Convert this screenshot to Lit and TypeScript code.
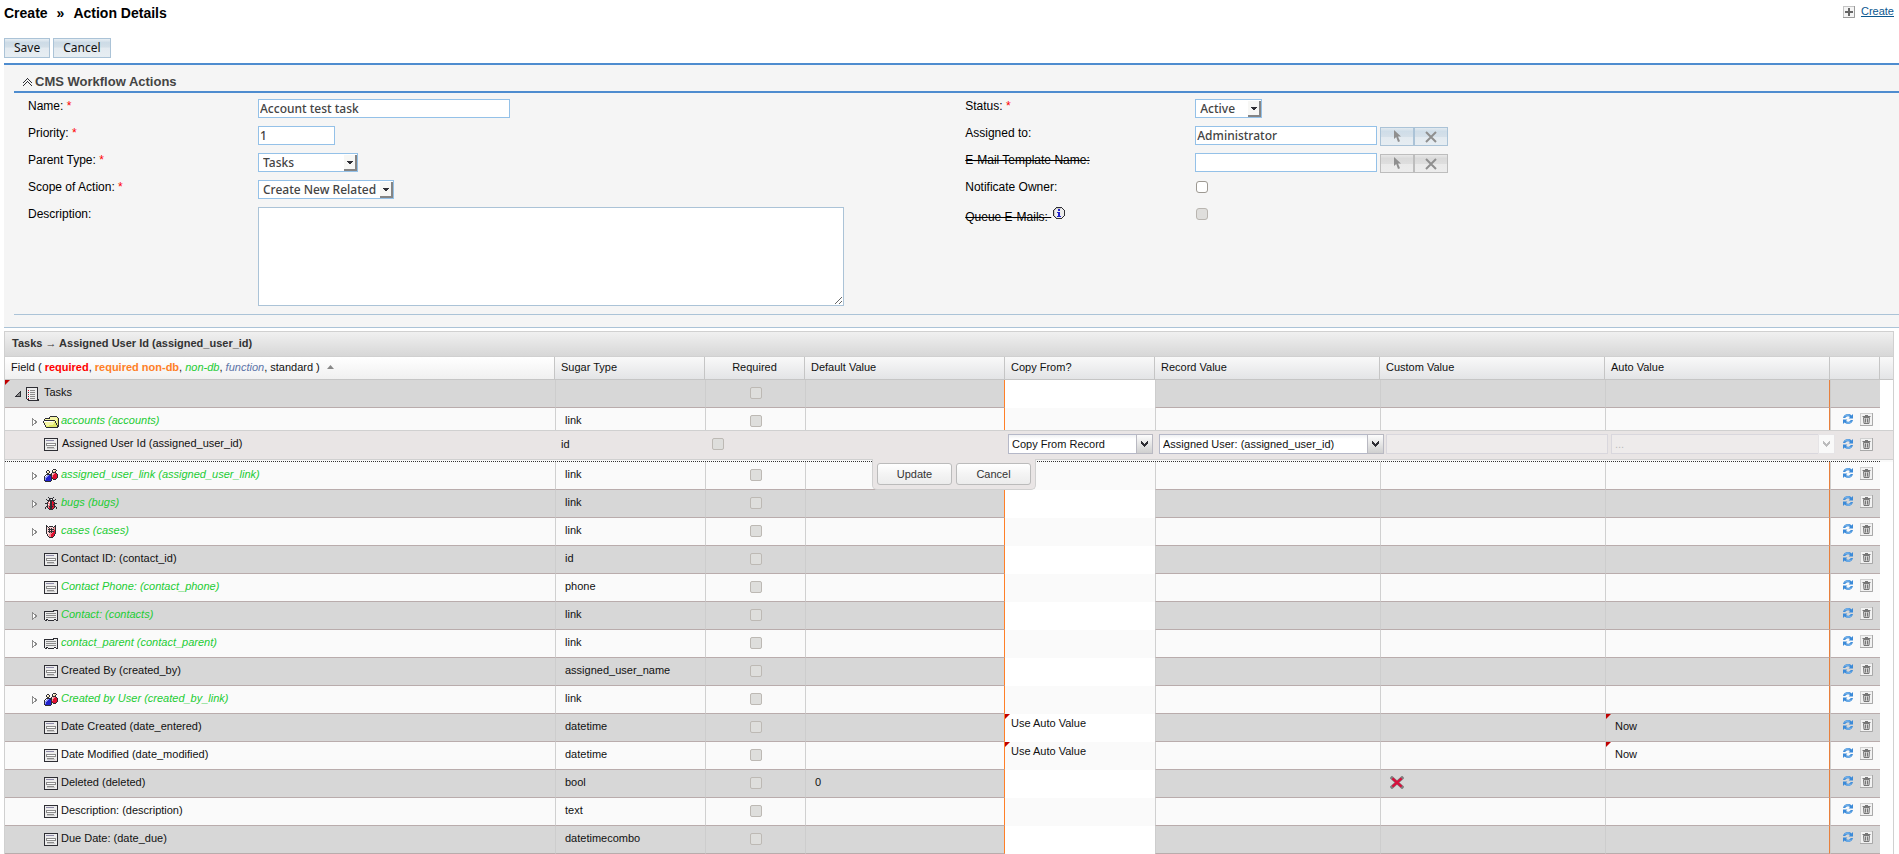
import { LitElement, html, svg, css, nothing } from 'lit';
import { customElement, property, state } from 'lit/decorators.js';
import { classMap } from 'lit/directives/class-map.js';

/* ---------- small bitmap-style icons, one character per pixel ---------- */

const PALETTE: Record<string, string> = {
  k: '#2e2e34', g: '#8c8c8c', l: '#c9c9c9', w: '#ffffff', e: '#ececec',
  r: '#e01030', p: '#f08a90', P: '#fcd5d5', b: '#2222cc', B: '#8f96f4',
  s: '#f5e2b4', y: '#f6f6a6', Y: '#dfe86a', v: '#8d89a8',
};

const BITMAPS: Record<string, string[]> = {
  list: [
    'kkkkkkkkkkkk.', 'keeeeeeeeeek.', 'keeeeeeeeeek.', 'kerwgggggeek.',
    'keeeeeeeeeek.', 'kekwgggggeek.', 'keeeeeeeeeek.', 'kerwgggggeek.',
    'keeeeeeeeeek.', 'kekwgggggeek.', 'keeeeeeeeeek.', 'kerwgggggeek.',
    '.kkeeeeeeeekk', '..kkkkkkkkkkk',
  ],
  folder: [
    '.......kkkkkkk..', '......kyyyyyyyk.', '..kkkkkyyyyyyyYk', '.kyyyyyyyyyyyyYk',
    '.kkkkkkkkkkkyyYk', 'kwwwwwwwwwyykyYk', 'kyyyyyyyyyyYkyYk', '.kyyyyyyyyyYYkYk',
    '.kyyyyyyyyYYYkYk', '..kyyyYYYYYYYYkk', '..kYYYYYYYYYYYkk', '...kkkkkkkkkkkk.',
  ],
  users: [
    '.........kkk..', '...kk...kwssk.', '..kwsk..kssk..', '..kssk..kkkk..',
    '...kk..kPpprk.', '..kkkkkkPprrrk', '.kwBBbkkprrrrk', 'kwBBbbbkprrrrk',
    'kBBbbbbkrrrrrk', 'kBbbbbbkkrrrk.', 'kBbbbbbk.kkk..', 'kbbbbbbk......', '.kkkkkk.......',
  ],
  bug: [
    '...k....k...', '....kkkk....', '.k..kgwk..k.', '..kkkkkkkk..', '...kpkkrk...',
    '..kpwkkrrk..', 'kkkppkkrrkkk', '..kwpkkrkk..', '..kppkkrrk..', '.kkpkkkkrkk.',
    'k.kprkkrrk.k', 'k..krkkrk..k', '....kkkk....',
  ],
  shield: [
    'k........k', 'kk.kkkk.kk', 'kPkPPPPkpk', 'kPPkPkPppk', 'kPkkkkkkpk', 'kPPkPkpprk',
    'kPkkkkkkrk', 'kPPkpkprrk', 'kPPPpprrrk', '.kPpprrrk.', '.kPpprrrk.', '..kpprrk..', '...kkkk...',
  ],
  card: [
    '.........kkkkk', 'kkkkkkkkkk.eek', 'keeeeeeeeeeeek', 'keggggggggggek', 'keeeeeeeeeeeek',
    'keggggggggggek', 'keeeeeeeeeeeek', 'keggggggggggek', 'keeeeeeeeeeeek', 'kekkeeeeeekkek', '.kk.kkkkkk..kk',
  ],
  field: [
    'kkkkkkkkkkkkkk', 'keeeeeeeeeeeek', 'kevvvvvvvveeek', 'keeeeeeeeeeeek', 'keeeeeeeeeeeek',
    'keggggggggggek', 'kegwwwwwwwwgek', 'keggggggggggek', 'keeeeeeeeeeeek', 'keegggggggeeek',
    'keelllllllleek', 'keeeeeeeeeeeek', 'kkkkkkkkkkkkkk',
  ],
  collapsed: [
    'g....', 'gg...', 'gwgg.', 'gwwgg', 'gwwgg', 'gwgg.', 'gg...', 'g....',
  ],
  expanded: ['.....k', '....kk', '...kgk', '..kggk', '.kgggk', 'kkkkkk'],
  chevrons: [
    '....k....', '...k.k...', '..k...k..', '.k..k..k.', 'k..k.k..k', '..k...k..', '.k.....k.', 'k.......k',
  ],
  info: [
    '...kkkkkk...', '..klllllek..', '.kleebbeeek.', 'kleeebbeeeek', 'kleeeeeeeeek', 'kleebbbeeeek',
    'kleeebbeeeek', 'kleeebbeeeek', 'kleeebbeeeek', '.klebbbbeek.', '..kleeeeek..', '...kkkkkk...',
  ],
  combo: ['k.....k', 'kk...kk', 'kkk.kkk', '.kkkkk.', '..kkk..', '...k...'],
  down: ['kkkkkk', '.kkkk.', '..kk..'],
};

const bitmap = (name: string) => {
  const rows = BITMAPS[name];
  const width = Math.max(...rows.map((r) => r.length));
  const cells: unknown[] = [];
  rows.forEach((row, y) => {
    let x = 0;
    while (x < row.length) {
      let end = x + 1;
      while (end < row.length && row[end] === row[x]) end++;
      if (PALETTE[row[x]]) {
        cells.push(svg`<rect x=${x} y=${y} width=${end - x} height="1" fill=${PALETTE[row[x]]}></rect>`);
      }
      x = end;
    }
  });
  return html`<svg class="px" width=${width} height=${rows.length}
    viewBox="0 0 ${width} ${rows.length}" shape-rendering="crispEdges" aria-hidden="true">${cells}</svg>`;
};

const refreshIcon = html`<svg width="12" height="12" viewBox="0 0 12 12" aria-hidden="true">
  <path d="M1 5C1.6 2.4 3.6 1 6 1C7.6 1 8.6 1.5 9.4 2.4L11 1V5.4H6.6L8 3.9C7.4 3.4 6.8 3.2 6 3.2C4.7 3.2 3.8 3.9 3.3 5Z" fill="#3b8ad8"/>
  <path d="M11 7C10.4 9.6 8.4 11 6 11C4.4 11 3.4 10.5 2.6 9.6L1 11V6.6H5.4L4 8.1C4.6 8.6 5.2 8.8 6 8.8C7.3 8.8 8.2 8.1 8.7 7Z" fill="#3b8ad8"/>
  <path d="M2.6 3.6C3.6 2.2 5.6 1.6 7.6 2.2M9.4 8.4C8.4 9.8 6.4 10.4 4.4 9.8" fill="none" stroke="#8fc6f5" stroke-width="1"/>
</svg>`;

const trashIcon = html`<svg width="13" height="13" viewBox="0 0 13 13" aria-hidden="true">
  <rect x="0.5" y="0.5" width="12" height="12" fill="#f2f2f2" stroke="#d0d0d0"/>
  <path d="M12.5 0V12.5H0" fill="none" stroke="#a9a9a9"/>
  <path d="M2.5 3.5H10.5M5 2.5H8" stroke="#777" fill="none"/>
  <path d="M3.5 4.5L4 10.5H9L9.5 4.5Z" fill="#d5d5d5" stroke="#777"/>
  <path d="M5.5 5.5V9.5M7.5 5.5V9.5" stroke="#777" fill="none"/>
</svg>`;

const crossIcon = html`<svg width="14" height="13" viewBox="0 0 14 13" aria-hidden="true">
  <path d="M2 2L12 11M12 2L2 11" stroke="#808080" stroke-width="3.4" stroke-linecap="square"/>
  <path d="M2.4 2.3L11.6 10.7M11.6 2.3L2.4 10.7" stroke="#d8103c" stroke-width="2.4"/>
</svg>`;

const pickIcon = html`<svg width="9" height="13" viewBox="0 0 9 13" aria-hidden="true">
  <path d="M1 0V9L3.2 7L5 12L7 11.2L5 6.4H8Z" fill="#8f8f8f"/></svg>`;

const clearIcon = html`<svg width="12" height="12" viewBox="0 0 12 12" aria-hidden="true">
  <path d="M1 1L11 11M11 1L1 11" stroke="#8f8f8f" stroke-width="2"/></svg>`;

const plusIcon = html`<svg width="12" height="12" viewBox="0 0 12 12" aria-hidden="true">
  <rect x="0.5" y="0.5" width="11" height="11" fill="#f4f4f4" stroke="#c4c4c4"/>
  <path d="M11.5 0V11.5H0" fill="none" stroke="#9a9a9a"/>
  <path d="M6 2V10M2 6H10" stroke="#666" stroke-width="2"/></svg>`;

/* ---------- data ---------- */

interface Row {
  name: string;
  type: string;
  icon: string;
  nonDb?: boolean;
  branch?: boolean;
  fallback?: string;
  copy?: string;
  auto?: string;
  cross?: boolean;
}

const BEFORE: Row[] = [
  { name: 'accounts (accounts)', type: 'link', icon: 'folder', nonDb: true, branch: true },
];

const AFTER: Row[] = [
  { name: 'assigned_user_link (assigned_user_link)', type: 'link', icon: 'users', nonDb: true, branch: true },
  { name: 'bugs (bugs)', type: 'link', icon: 'bug', nonDb: true, branch: true },
  { name: 'cases (cases)', type: 'link', icon: 'shield', nonDb: true, branch: true },
  { name: 'Contact ID: (contact_id)', type: 'id', icon: 'field' },
  { name: 'Contact Phone: (contact_phone)', type: 'phone', icon: 'field', nonDb: true },
  { name: 'Contact: (contacts)', type: 'link', icon: 'card', nonDb: true, branch: true },
  { name: 'contact_parent (contact_parent)', type: 'link', icon: 'card', nonDb: true, branch: true },
  { name: 'Created By (created_by)', type: 'assigned_user_name', icon: 'field' },
  { name: 'Created by User (created_by_link)', type: 'link', icon: 'users', nonDb: true, branch: true },
  { name: 'Date Created (date_entered)', type: 'datetime', icon: 'field', copy: 'Use Auto Value', auto: 'Now' },
  { name: 'Date Modified (date_modified)', type: 'datetime', icon: 'field', copy: 'Use Auto Value', auto: 'Now' },
  { name: 'Deleted (deleted)', type: 'bool', icon: 'field', fallback: '0', cross: true },
  { name: 'Description: (description)', type: 'text', icon: 'field' },
  { name: 'Due Date: (date_due)', type: 'datetimecombo', icon: 'field' },
];

/* ---------- workflow form ---------- */

@customElement('action-form')
export class ActionForm extends LitElement {
  static styles = css`
    :host { display: block; font-family: "Liberation Sans", Arial, sans-serif; font-size: 12px; color: #000; }
    * { box-sizing: border-box; }
    svg { display: block; }
    .toolbar { display: flex; gap: 3px; margin-bottom: 5px; }
    .btn {
      height: 20px; padding: 0 9px; border: 1px solid #abc3d7; color: #111;
      background: linear-gradient(#e8eff4, #cddbe6 20%, #d3dfe8 45%, #e3eaf0 50%, #e6edf2);
      font: 12px/16px "Noto Sans", "Open Sans", sans-serif;
    }
    .panel { background: #f5f5f5; border-top: 2px solid #4e8ccf; border-bottom: 1px solid #abc3d7; padding: 9px 0 12px 10px; }
    .heading {
      display: flex; align-items: center; gap: 3px; margin: 0; padding: 0 0 1px 9px;
      border-bottom: 2px solid #4e8ccf; color: #444; font-size: 13px; line-height: 16px;
    }
    .form {
      display: grid; grid-template-columns: 230px 37.8% 230px minmax(0, 1fr); grid-auto-rows: minmax(27px, auto);
      padding: 6px 0 8px 14px; border-bottom: 1px solid #abc3d7;
    }
    .label { line-height: 15px; }
    .struck { text-decoration: line-through; }
    .hint { display: flex; gap: 2px; }
    .hint label { padding-top: 3px; white-space: pre; }
    .req { color: #f00; }
    .cell { display: flex; align-items: flex-start; gap: 3px; }
    .text, .select, .area {
      margin: 0; border: 1px solid #94c1e8; border-radius: 0; background: #fff; color: #444;
      font: 500 12px/15px "Noto Sans", "Open Sans", sans-serif; outline: none;
    }
    .text { height: 19px; padding: 0 1px; }
    .w-name { width: 252px; }
    .w-short { width: 77px; }
    .w-relate { width: 182px; }
    .area { width: 586px; max-width: 100%; height: 99px; display: block; resize: both; border-color: #abc3d7; }
    .drop { position: relative; display: block; height: 19px; }
    .select { appearance: none; height: 19px; width: 100%; padding: 0 16px 0 4px; }
    .w-type { width: 100px; }
    .w-scope { width: 136px; }
    .w-status { width: 67px; }
    .bevel {
      position: absolute; right: 1px; top: 2px; width: 13px; height: 16px; pointer-events: none;
      display: flex; align-items: center; justify-content: center;
      background: #f7f7f5; border-right: 2px solid #858585; border-bottom: 2px solid #858585;
    }
    .check { appearance: none; width: 12px; height: 12px; margin: 1px; border: 1px solid #9d9992; border-radius: 3px; background: #fff; }
    .check:disabled { background: #dfdedc; border-color: #b9b5b0; }
    .pair { display: flex; margin-top: 1px; }
    .pick {
      width: 34px; height: 19px; padding: 0; display: flex; align-items: center; justify-content: center;
      border: 1px solid #abc3d7; background: linear-gradient(#e2eaf0, #cfdde8 20%, #d5e0e9 50%, #e3eaf0 55%, #e6edf2);
    }
    .pick.off { border-color: #bdbdbd; background: linear-gradient(#e8e8e8, #dadada 20%, #dedede 50%, #eaeaea 55%, #ececec); }
  `;

  private pickers(off: boolean, what: string) {
    return html`<div class="pair">
      <button class=${classMap({ pick: true, off })} aria-label="Select ${what}" disabled>${pickIcon}</button>
      <button class=${classMap({ pick: true, off })} aria-label="Clear ${what}" disabled>${clearIcon}</button>
    </div>`;
  }

  private select(id: string, width: string, value: string) {
    return html`<div class="drop ${width}">
      <select class="select" id=${id}><option>${value}</option></select>
      <span class="bevel">${bitmap('down')}</span>
    </div>`;
  }

  render() {
    const req = html`<span class="req">*</span>`;
    return html`
      <div class="toolbar">
        <button class="btn">Save</button>
        <button class="btn">Cancel</button>
      </div>
      <section class="panel">
        <h2 class="heading">${bitmap('chevrons')}CMS Workflow Actions</h2>
        <div class="form">
          <div class="label"><label for="name">Name: ${req}</label></div>
          <div class="cell"><input class="text w-name" id="name" .value=${'Account test task'} /></div>
          <div class="label"><label for="status">Status: ${req}</label></div>
          <div class="cell">${this.select('status', 'w-status', 'Active')}</div>

          <div class="label"><label for="priority">Priority: ${req}</label></div>
          <div class="cell"><input class="text w-short" id="priority" .value=${'1'} /></div>
          <div class="label"><label for="assigned">Assigned to:</label></div>
          <div class="cell"><input class="text w-relate" id="assigned" .value=${'Administrator'} />${this.pickers(false, 'user')}</div>

          <div class="label"><label for="parent">Parent Type: ${req}</label></div>
          <div class="cell">${this.select('parent', 'w-type', 'Tasks')}</div>
          <div class="label"><label class="struck" for="template">E-Mail Template Name:</label></div>
          <div class="cell"><input class="text w-relate" id="template" />${this.pickers(true, 'template')}</div>

          <div class="label"><label for="scope">Scope of Action: ${req}</label></div>
          <div class="cell">${this.select('scope', 'w-scope', 'Create New Related')}</div>
          <div class="label"><label for="notify">Notificate Owner:</label></div>
          <div class="cell"><input class="check" type="checkbox" id="notify" /></div>

          <div class="label"><label for="description">Description:</label></div>
          <div class="cell"><textarea class="area" id="description"></textarea></div>
          <div class="label hint"><label class="struck" for="queue">Queue E-Mails: </label>${bitmap('info')}</div>
          <div class="cell"><input class="check" type="checkbox" id="queue" disabled /></div>
        </div>
      </section>
    `;
  }
}

/* ---------- field grid ---------- */

@customElement('field-grid')
export class FieldGrid extends LitElement {
  @property({ type: Array }) before: Row[] = BEFORE;
  @property({ type: Array }) after: Row[] = AFTER;
  @state() private editing = true;

  static styles = css`
    :host { display: block; font: 11px/13px "Liberation Sans", Arial, sans-serif; color: #111; }
    * { box-sizing: border-box; }
    svg { display: block; flex: none; }
    button { font: inherit; margin: 0; }
    .grid { border: 1px solid #d0d0d0; border-bottom: 0; }
    .title {
      margin: 0; height: 25px; padding: 5px 7px; border-bottom: 1px solid #d0d0d0;
      background: linear-gradient(#f0f0f0, #d7d7d7); color: #333; font-size: 11px; line-height: 13px;
    }
    .table { width: 100%; table-layout: fixed; border-collapse: separate; border-spacing: 0; }
    .c50 { width: 50px; } .c100 { width: 100px; } .c150 { width: 150px; }
    .c200 { width: 200px; } .c225 { width: 225px; } .c13 { width: 13px; }
    th {
      height: 23px; padding: 4px 6px 5px; text-align: left; font-weight: normal; vertical-align: top; color: #111;
      background: linear-gradient(#f9f9f9, #e3e4e6); border-right: 1px solid #c5c5c5; border-bottom: 1px solid #c5c5c5;
      white-space: nowrap;
    }
    th.sorted { background: linear-gradient(#fff, #f0f0f0); }
    th.mid { text-align: center; }
    th:last-child { border-right: 0; }
    .up { display: inline-block; margin-left: 4px; vertical-align: 2px; }
    .required { color: #f00; font-weight: bold; }
    .nondbreq { color: #ff7f27; font-weight: bold; }
    .nondb { color: #22cc33; font-style: italic; }
    .func { color: #5c74a8; font-style: italic; }
    td {
      position: relative; height: 28px; padding: 6px 9px; vertical-align: top; white-space: nowrap;
      border-left: 1px solid #d0d0d0; border-bottom: 1px solid #b9acac; background: #fafafa;
    }
    .alt td { background: #d7d7d7; border-left-color: #cdcdcd; }
    td.first { padding: 0; border-left: 0; }
    td.default { border-right: 1px solid #ff7f27; }
    td.auto { border-right: 1px solid #e8803c; }
    td.copy { padding: 3px 6px; border-left: 0; border-bottom: 0; }
    .alt td.copy { background: #fff; }
    td.pad, .alt td.pad { padding: 0; border: 0; background: #fff; }
    .dirty::before {
      content: ""; position: absolute; left: 0; top: 0;
      border-top: 5px solid #c00000; border-right: 5px solid transparent;
    }
    td.acts { padding: 5px 0 0 11px; }
    .node { display: flex; align-items: center; height: 27px; padding-left: 27px; }
    .node.root { padding-left: 10px; }
    .twist { width: 11px; height: 16px; padding: 0; border: 0; background: none; display: flex; align-items: center; }
    .slot { width: 16px; display: flex; justify-content: center; }
    .txt { margin: 0 0 2px 2px; }
    .root .txt { margin-left: 5px; }
    .check { appearance: none; display: block; width: 12px; height: 12px; margin: 1px auto 0; border: 1px solid #bdb9b4; border-radius: 2px; background: #dededc; }
    .actions { display: flex; gap: 6px; align-items: flex-start; }
    .act { padding: 0; border: 0; background: none; display: block; }

    td.host { height: 26px; padding: 0; border: 0; background: #fafafa; }
    .editor {
      position: absolute; inset: -6px 0 auto 0; z-index: 1; height: 30px;
      display: grid; grid-template-columns: minmax(0, 1fr) 150px 100px 200px 150px 225px 225px 225px 63px;
      align-items: center; padding-bottom: 2px;
      background: #e9e5e5; border-top: 1px solid #d0d0d0; border-bottom: 1px solid #d0d0d0;
    }
    .editor .node { height: 26px; padding-left: 39px; }
    .editor .node .txt { margin-left: 4px; }
    .editor .type { padding-left: 6px; }
    .editor .check { margin: 0 7px; }
    .editor .actions { padding-left: 12px; }
    .wrap { position: relative; height: 20px; margin: 0 2px 0 3px; }
    .wrap.wide { margin: 0 -4px 0 4px; }
    .wrap.last { margin: 0 -5px 0 6px; }
    .wrap.plain { margin: 0 -3px 0 6px; }
    .combo {
      appearance: none; display: block; width: 100%; height: 20px; margin: 0; padding: 0 20px 1px 3px; border: 1px solid #b5b8c8; border-radius: 0;
      background: linear-gradient(#eef0f2, #fff 4px); color: #111; font: 11px/16px "Liberation Sans", Arial, sans-serif; opacity: 1;
    }
    .trigger {
      position: absolute; right: 0; top: 0; width: 17px; height: 20px; pointer-events: none;
      display: flex; align-items: center; justify-content: center;
      background: linear-gradient(#fcfcfc, #cfcfcf); border: 1px solid #b9b9c2;
    }
    .combo:disabled { background: #eeebeb; border-color: #d9d7dd; color: #bbb; }
    .combo:disabled + .trigger { background: #f9f9f9; border-color: #e6e4e6; }
    .combo:disabled + .trigger svg { opacity: 0.3; }
    .dotted { position: absolute; left: 0; right: 13px; bottom: 0; border-bottom: 1px dotted #333; }
    .bar {
      position: absolute; left: 50%; top: 23px; z-index: 2; transform: translateX(-50%); margin-left: 5px;
      display: flex; gap: 4px; padding: 4px; background: #e9e5e5;
      border: 1px solid #d0d0d0; border-top: 0; border-radius: 0 0 5px 5px;
    }
    .ext {
      width: 75px; height: 22px; padding: 0; color: #333; border: 1px solid #bbb; border-radius: 3px;
      background: linear-gradient(#fff, #f4f4f4 50%, #ececec);
    }
  `;

  private actions() {
    return html`<div class="actions">
      <button class="act" aria-label="Reset">${refreshIcon}</button>
      <button class="act" aria-label="Delete">${trashIcon}</button>
    </div>`;
  }

  private row(r: Row, alt: boolean) {
    return html`<tr class=${classMap({ alt })}>
      <td class="first"><div class="node">
        ${r.branch ? html`<button class="twist" aria-label="Expand">${bitmap('collapsed')}</button>` : html`<span class="twist"></span>`}
        <span class="slot">${bitmap(r.icon)}</span>
        <span class=${classMap({ txt: true, nondb: !!r.nonDb })}>${r.name}</span>
      </div></td>
      <td>${r.type}</td>
      <td><input class="check" type="checkbox" aria-label="Required" disabled /></td>
      <td class="default">${r.fallback ?? nothing}</td>
      <td class=${classMap({ copy: true, dirty: !!r.copy })}>${r.copy ?? nothing}</td>
      <td></td>
      <td>${r.cross ? crossIcon : nothing}</td>
      <td class=${classMap({ auto: true, dirty: !!r.auto })}>${r.auto ?? nothing}</td>
      <td class="acts">${this.actions()}</td>
      <td class="pad"></td>
    </tr>`;
  }

  private combo(label: string, value: string, cls: string, disabled = false) {
    return html`<div class="wrap ${cls}">
      <select class="combo" aria-label=${label} ?disabled=${disabled}><option>${value}</option></select>
      <span class="trigger">${bitmap('combo')}</span>
    </div>`;
  }

  private editor() {
    const close = () => (this.editing = false);
    return html`<div class="editor">
        <div class="node">${bitmap('field')}<span class="txt">Assigned User Id (assigned_user_id)</span></div>
        <div class="type">id</div>
        <input class="check" type="checkbox" aria-label="Required" disabled />
        <div></div>
        ${this.combo('Copy From?', 'Copy From Record', '')}
        ${this.combo('Record Value', 'Assigned User: (assigned_user_id)', 'wide')}
        <div class="wrap plain"><input class="combo" aria-label="Custom Value" disabled /></div>
        ${this.combo('Auto Value', '...', 'last', true)}
        ${this.actions()}
      </div>
      <div class="dotted"></div>
      <div class="bar">
        <button class="ext" @click=${close}>Update</button>
        <button class="ext" @click=${close}>Cancel</button>
      </div>`;
  }

  render() {
    return html`<section class="grid">
      <h2 class="title">Tasks → Assigned User Id (assigned_user_id)</h2>
      <table class="table">
        <colgroup>
          <col /><col class="c150" /><col class="c100" /><col class="c200" /><col class="c150" />
          <col class="c225" /><col class="c225" /><col class="c225" /><col class="c50" /><col class="c13" />
        </colgroup>
        <thead><tr>
          <th class="sorted">Field ( <span class="required">required</span>, <span class="nondbreq">required non-db</span>,
            <span class="nondb">non-db</span>, <span class="func">function</span>, standard )
            <svg class="up" width="7" height="4" viewBox="0 0 7 4" aria-hidden="true"><path d="M0 4L3.5 0L7 4Z" fill="#888"/></svg></th>
          <th>Sugar Type</th><th class="mid">Required</th><th>Default Value</th><th>Copy From?</th>
          <th>Record Value</th><th>Custom Value</th><th>Auto Value</th><th></th><th></th>
        </tr></thead>
        <tbody>
          <tr class="alt">
            <td class="first dirty"><div class="node root">
              <button class="twist" aria-label="Collapse">${bitmap('expanded')}</button>
              ${bitmap('list')}<span class="txt">Tasks</span>
            </div></td>
            <td></td>
            <td><input class="check" type="checkbox" aria-label="Required" disabled /></td>
            <td class="default"></td><td class="copy"></td><td></td><td></td>
            <td class="auto"></td><td></td><td class="pad"></td>
          </tr>
          ${this.before.map((r) => this.row(r, false))}
          ${this.editing ? html`<tr><td class="host" colspan="10">${this.editor()}</td></tr>` : nothing}
          ${this.after.map((r, i) => this.row(r, i % 2 === 1))}
        </tbody>
      </table>
    </section>`;
  }
}

/* ---------- page ---------- */

@customElement('app-root')
export class AppRoot extends LitElement {
  static styles = css`
    :host { display: block; padding-left: 4px; background: #fff; font-family: "Liberation Sans", Arial, sans-serif; color: #000; }
    .head { display: flex; justify-content: space-between; align-items: flex-start; padding: 5px 5px 17px 0; }
    .title { margin: 0; font-size: 14px; line-height: 16px; font-weight: bold; display: flex; gap: 9px; }
    .create { display: flex; align-items: center; gap: 6px; font-size: 11px; line-height: 13px; color: #0b578f; }
    .create svg { display: block; }
    .grid { margin: 3px 5px 0 0; }
  `;

  render() {
    return html`
      <header class="head">
        <h1 class="title"><span>Create</span><span>»</span><span>Action Details</span></h1>
        <div class="create">${plusIcon}<a class="create" href="#create">Create</a></div>
      </header>
      <action-form></action-form>
      <field-grid class="grid"></field-grid>
    `;
  }
}
